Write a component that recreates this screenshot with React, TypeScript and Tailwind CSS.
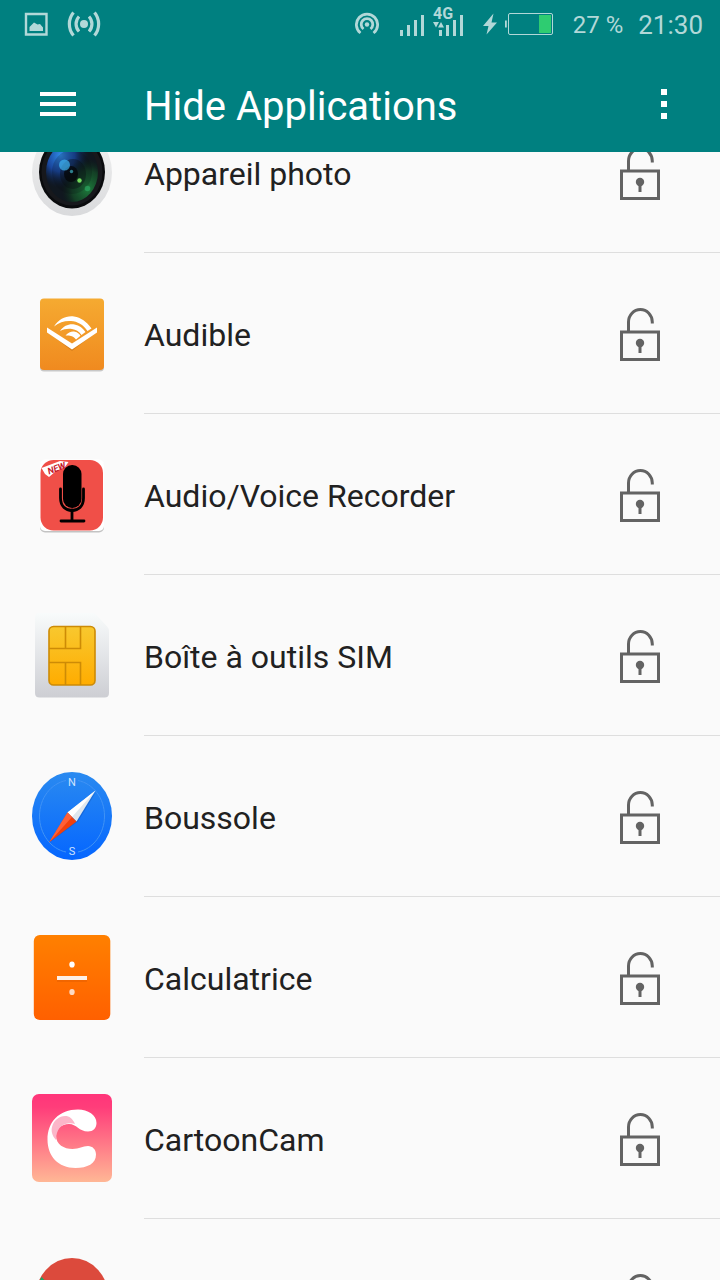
import { useLayoutEffect, useRef, useState, type ReactElement } from "react";

interface AppEntry {
  name: string;
  Icon: () => ReactElement;
}

const iconClass = "h-22 w-20 shrink-0";

function CameraIcon() {
  return (
    <svg viewBox="0 0 80 88" className={iconClass} aria-hidden="true">
      <defs>
        <linearGradient id="cam-rim" x1="0" y1="0" x2="0" y2="1">
          <stop offset="0" stopColor="#f3f3f3" />
          <stop offset="1" stopColor="#d9dadc" />
        </linearGradient>
        <radialGradient id="cam-blue" cx="0.28" cy="0.22" r="0.55">
          <stop offset="0" stopColor="#2f8ae6" />
          <stop offset="0.5" stopColor="#1b4fb4" stopOpacity="0.85" />
          <stop offset="1" stopColor="#0b1a3a" stopOpacity="0" />
        </radialGradient>
        <radialGradient id="cam-green" cx="0.8" cy="0.78" r="0.5">
          <stop offset="0" stopColor="#1e7a3c" />
          <stop offset="0.6" stopColor="#175c2b" stopOpacity="0.6" />
          <stop offset="1" stopColor="#0b2a16" stopOpacity="0" />
        </radialGradient>
      </defs>
      <ellipse cx="40" cy="44.5" rx="40" ry="43.5" fill="url(#cam-rim)" />
      <ellipse cx="40" cy="44" rx="33" ry="36.5" fill="#0a0b0d" />
      <ellipse cx="40" cy="44" rx="30.500" ry="33.500" fill="#17181c" />
      <ellipse cx="40" cy="44" rx="26" ry="30" fill="#10171f" />
      <ellipse cx="40" cy="44" rx="26" ry="30" fill="url(#cam-blue)" />
      <ellipse cx="40" cy="44" rx="26" ry="30" fill="url(#cam-green)" />
      <ellipse cx="40" cy="44" rx="20" ry="22" fill="#0b0f14" opacity="0.2" />
      <ellipse cx="41" cy="46" rx="13" ry="15" fill="#0b0f14" opacity="0.4" />
      <ellipse cx="39" cy="46" rx="7" ry="8" fill="#05070a" opacity="0.8" />
      <circle cx="32.500" cy="37" r="5.5" fill="#3fb4f0" opacity="0.7" />
      <circle cx="39.5" cy="43.5" r="1.7" fill="#2e7f8d" />
      <circle cx="47.5" cy="52.5" r="2.2" fill="#74d95c" />
      <circle cx="55.5" cy="60.5" r="2.8" fill="#2fae68" opacity="0.6" />
    </svg>
  );
}

function AudibleIcon() {
  return (
    <svg viewBox="0 0 80 88" className={iconClass} aria-hidden="true">
      <defs>
        <linearGradient id="audible-bg" x1="0" y1="0" x2="0" y2="1">
          <stop offset="0" stopColor="#f5aa31" />
          <stop offset="1" stopColor="#f08a1f" />
        </linearGradient>
      </defs>
      <rect x="8" y="11" width="64" height="71.500" rx="4" fill="#000" opacity="0.2" />
      <rect x="8" y="9.5" width="64" height="71.500" rx="4" fill="url(#audible-bg)" />
      <path d="M15.500 41v-3.500L40 54.500l24.500-17V41L40 60Z" transform="translate(0 2)" fill="#b8660f" opacity="0.45" />
      <path d="M15 38.500 40 54.500 65 38.500V43.500L40 60.500 15 43.500Z" fill="#fff" />
      <path d="M22 37.500C27 30 34 26.500 42 27.500c7 1 12.500 5 17.500 12L55.500 42C51 35.500 45.500 32.500 39 32c-6-.4-11.500 1-17 5.500Z" fill="#fff" />
      <path d="M28 42c4-5.500 9-7.300 14.500-6.500 5 .8 8 3.500 11 7.500l-4 3c-2.700-3.700-5.500-5.500-9.500-6-4.300-.5-8 0-12 2Z" fill="#fff" />
      <path d="M33.500 46.500c3-3.500 6.500-4.500 9.500-3.800 2.500.6 4.200 2 5.500 4L44 50.500c-1.500-2-2.800-3.200-5-3.600-1.800-.4-3.500-.5-5.500-.4Z" fill="#fff" />
    </svg>
  );
}

function RecorderIcon() {
  return (
    <svg viewBox="0 0 80 88" className={iconClass} aria-hidden="true">
      <rect x="8" y="11" width="64" height="71.500" rx="5" fill="#000" opacity="0.22" />
      <rect x="8" y="9.500" width="64" height="71.500" rx="5" fill="#fff" />
      <rect x="8.500" y="10" width="62.500" height="70.500" rx="13" fill="#f04f48" />
      <path d="M9.500 18 28 11l8.500 1-3.500 5-9 4-7 6-4-3Z" fill="#fff" />
      <text
        x="17"
        y="24.500"
        transform="rotate(-21 17 24.500)"
        fontFamily="Liberation Sans Narrow, Roboto, sans-serif"
        fontSize="9"
        fontWeight="700"
        fontStyle="italic"
        fill="#c5172b"
      >
        NEW
      </text>
      <rect x="31" y="15" width="18.500" height="43" rx="9" fill="#000" />
      <path d="M28.500 39v9c0 8 5 12.500 11.500 12.500s11.500-4.500 11.500-12.500V39" fill="none" stroke="#000" strokeWidth="2.800" strokeLinecap="round" />
      <path d="M40 60v10M29 71h23" stroke="#000" strokeWidth="2.800" strokeLinecap="round" />
    </svg>
  );
}

function SimIcon() {
  return (
    <svg viewBox="0 0 80 88" className={iconClass} aria-hidden="true">
      <defs>
        <linearGradient id="sim-card" x1="0" y1="0" x2="0" y2="1">
          <stop offset="0" stopColor="#f8fbfb" />
          <stop offset="0.5" stopColor="#e3e5e8" />
          <stop offset="1" stopColor="#cdced3" />
        </linearGradient>
        <linearGradient id="sim-chip" x1="0" y1="0" x2="0" y2="1">
          <stop offset="0" stopColor="#f8c82f" />
          <stop offset="1" stopColor="#ffac00" />
        </linearGradient>
      </defs>
      <path d="M7 2h53c2 0 3 .5 4.500 2L75 15.500c1.500 1.500 2 3 2 5V82c0 3-1.500 4.500-4.500 4.500h-65C4.500 86.500 3 85 3 82V7c0-3 1-5 4-5Z" fill="url(#sim-card)" />
      <rect x="17" y="15.500" width="46" height="58.500" rx="4.500" fill="url(#sim-chip)" stroke="#cd8b06" strokeWidth="1.600" />
      <path d="M17 37.500h31.500V15.500M33.500 15.500v22M17 51.500h31.500V74M33.500 51.500V74" fill="none" stroke="#cd8b06" strokeWidth="1.600" />
    </svg>
  );
}

function CompassIcon() {
  return (
    <svg viewBox="0 0 80 88" className={iconClass} aria-hidden="true">
      <defs>
        <linearGradient id="compass-bg" x1="0" y1="0" x2="0" y2="1">
          <stop offset="0" stopColor="#2a8af0" />
          <stop offset="1" stopColor="#0566ff" />
        </linearGradient>
      </defs>
      <ellipse cx="40" cy="44" rx="40" ry="44" fill="url(#compass-bg)" />
      <path d="M46 8.500C61 11.500 72.500 26 72.500 44S61 77 46 80M34 80C19 77 7.500 62 7.500 44S19 11.500 34 8.500" fill="none" stroke="#4093f5" strokeWidth="1" />
      <g fontFamily="Roboto, sans-serif" fontSize="11" textAnchor="middle" fill="#cfe3fd">
        <text x="40" y="14">N</text>
        <text x="40" y="83">S</text>
      </g>
      <path d="M64 20 46 49.500 18 70Z" fill="#0a3f9c" opacity="0.3" />
      <path d="M63.500 18.500 35.500 40.500 44.500 49.500Z" fill="#dfe7ee" />
      <path d="M63.500 18.500 35.500 40.500 40 45Z" fill="#fff" />
      <path d="M17 70.500 35.500 40.500 44.500 49.500Z" fill="#f1400d" />
      <path d="M17 70.500 35.500 40.500 40 45Z" fill="#ff6036" />
    </svg>
  );
}

function CalculatorIcon() {
  return (
    <svg viewBox="0 0 80 88" className={iconClass} aria-hidden="true">
      <defs>
        <linearGradient id="calc-bg" x1="0" y1="0" x2="0" y2="1">
          <stop offset="0" stopColor="#ff8000" />
          <stop offset="1" stopColor="#ff6000" />
        </linearGradient>
      </defs>
      <rect x="1.800" y="2" width="76.500" height="85" rx="6" fill="url(#calc-bg)" />
      <rect x="25" y="45" width="30" height="4" fill="#c94a00" opacity="0.25" />
      <rect x="25" y="43" width="30" height="4" fill="#fdf0e6" />
      <ellipse cx="40" cy="31.500" rx="2.700" ry="3.100" fill="#fff" />
      <ellipse cx="40" cy="59" rx="2.700" ry="3.100" fill="#fdd9c2" />
    </svg>
  );
}

function CartoonCamIcon() {
  return (
    <svg viewBox="0 0 80 88" className={iconClass} aria-hidden="true">
      <defs>
        <linearGradient id="cartoon-bg" x1="0" y1="0" x2="0" y2="1">
          <stop offset="0" stopColor="#ff357a" />
          <stop offset="0.150" stopColor="#ff3d7a" />
          <stop offset="1" stopColor="#ffb795" />
        </linearGradient>
      </defs>
      <rect width="80" height="88" rx="7" fill="url(#cartoon-bg)" />
      <path
        d="M46 15.500c10 0 18.500 5.500 18.500 13.500 0 5-3.500 8.500-8.500 8.500-9 0-11.500-7.500-19-7.500-8 0-13 5-13 11.500 0 9 8 13.500 16.500 13.500 7 0 10-3 15.500-3 4.500 0 8 3.500 8 8.500 0 9-8.500 13.500-20.500 13.500C26 74 15.500 62 15.500 45.500 15.500 28 27 15.500 46 15.500Z"
        fill="#fff"
      />
      <path d="M24 46c-4-4.500-5-9-4-13 1.700-7 7.500-11 13-11 4.500 0 7.500 2.500 10 8-2-.8-4-.9-6-.7-8 .7-13 6.700-13 16.700Z" fill="#fcb6c9" />
    </svg>
  );
}

function ChromeIcon() {
  return (
    <svg viewBox="0 0 80 88" className={iconClass} aria-hidden="true">
      <ellipse cx="40" cy="44" rx="37" ry="41" fill="#dc4a3c" />
      <path d="M9.500 22C0 38 2 60 14 74c7 7 15 10.500 22 10.500L50 62 40 44Z" fill="#1da462" />
      <path d="M74 30H40L50 62 36 84.500C58 86 77 68 77 44c0-5-1-10-3-14Z" fill="#ffcd46" />
      <path d="M10.500 23 40 23V50Z" fill="#dc4a3c" />
      <ellipse cx="40" cy="45" rx="17" ry="19" fill="#fff" />
      <ellipse cx="40" cy="45" rx="13" ry="15" fill="#4c8bf5" />
    </svg>
  );
}

const apps: AppEntry[] = [
  { name: "Appareil photo", Icon: CameraIcon },
  { name: "Audible", Icon: AudibleIcon },
  { name: "Audio/Voice Recorder", Icon: RecorderIcon },
  { name: "Boîte à outils SIM", Icon: SimIcon },
  { name: "Boussole", Icon: CompassIcon },
  { name: "Calculatrice", Icon: CalculatorIcon },
  { name: "CartoonCam", Icon: CartoonCamIcon },
  { name: "Chrome", Icon: ChromeIcon },
];

export default function App() {
  const listRef = useRef<HTMLElement>(null);
  const [hidden, setHidden] = useState<string[]>([]);

  useLayoutEffect(() => {
    if (listRef.current) listRef.current.scrollTop = 60;
  }, []);

  const toggle = (name: string) =>
    setHidden((prev) =>
      prev.includes(name) ? prev.filter((n) => n !== name) : [...prev, name]
    );

  return (
    <div className="flex h-screen flex-col bg-[#fafafa] font-[Roboto,sans-serif]">
      <header className="bg-[#008080]">
        <StatusBar />
        <div className="flex h-26 items-center pt-2 pr-10 pl-10 text-white">
          <button type="button" aria-label="Menu">
            <svg viewBox="0 0 36 24" className="h-6 w-9" fill="currentColor">
              <path d="M0 0h36v4H0zM0 10h36v4H0zM0 20h36v4H0z" />
            </svg>
          </button>
          <h1 className="ml-17 flex-1 pt-1.5 text-[40px] leading-12">
            Hide Applications
          </h1>
          <button type="button" aria-label="Options" className="w-8">
            <svg viewBox="0 0 32 30" className="h-[30px] w-8" fill="currentColor">
              <path d="M13 0h6v6h-6zM13 12h6v6h-6zM13 24h6v6h-6z" />
            </svg>
          </button>
        </div>
      </header>

      <main ref={listRef} className="flex-1 overflow-y-auto [scrollbar-width:none]">
        <ul>
          {apps.map(({ name, Icon }) => (
            <li key={name} className="flex pl-8">
              <div className="flex items-center pr-8 pb-0.5">
                <Icon />
              </div>
              <div className="flex h-[161px] flex-1 items-center justify-between border-b border-[#dedede] pr-[60px]">
                <span className="pt-1 text-[32px] leading-8 text-[#212121]">
                  {name}
                </span>
                <button
                  type="button"
                  aria-label={name}
                  aria-pressed={hidden.includes(name)}
                  onClick={() => toggle(name)}
                >
                  <LockIcon locked={hidden.includes(name)} />
                </button>
              </div>
            </li>
          ))}
        </ul>
      </main>
    </div>
  );
}

function LockIcon({ locked }: { locked: boolean }) {
  return (
    <svg viewBox="0 0 40 56" className="h-14 w-10" fill="none" stroke="#636363" strokeWidth="3">
      <rect x="1.500" y="27" width="37" height="27.500" />
      <path d={locked ? "M8.500 27V17a11.700 12 0 0 1 23.400 0v10" : "M8.500 27V17a11.900 12.500 0 0 1 23.800 0v1.500"} />
      <circle cx="20" cy="38" r="4.200" fill="#636363" stroke="none" />
      <path d="M20 39v9" />
    </svg>
  );
}

function StatusBar() {
  return (
    <div className="flex h-12 items-center justify-between pr-[17px] pl-6 text-[#b2d8d8]">
      <div className="flex items-center gap-[18px]">
        <svg viewBox="0 0 24 24" className="size-6" fill="currentColor" aria-hidden="true">
          <path d="M2 2h20.500v20.500H2Z" fill="none" stroke="currentColor" strokeWidth="2.400" />
          <path d="M5.500 19v-4l4.500-4.500 3.500 2 2.500-.5 3 3.500V19Z" />
        </svg>
        <svg viewBox="0 0 36 26" className="h-[26px] w-9" fill="none" stroke="currentColor" strokeWidth="3.200" aria-hidden="true">
          <circle cx="18" cy="13" r="4" fill="currentColor" stroke="none" />
          <path d="M13 5.500a11 11 0 0 0 0 15M23 5.500a11 11 0 0 1 0 15M7.500 1.500a18 18 0 0 0 0 23M28.500 1.500a18 18 0 0 1 0 23" />
        </svg>
      </div>

      <div className="flex items-center gap-5">
        <svg viewBox="0 0 24 24" className="size-6" fill="none" stroke="currentColor" strokeWidth="2.800" aria-hidden="true">
          <circle cx="12" cy="12.500" r="2.200" fill="currentColor" stroke="none" />
          <path d="M5.500 21a10.600 10.600 0 1 1 13 0" />
          <path d="M8.500 17a5.800 5.800 0 1 1 7 0" />
        </svg>
        <div className="flex items-center gap-2">
          <svg viewBox="0 0 25 40" className="h-10 w-[25px]" fill="currentColor" aria-hidden="true">
            <path d="M1 26h3v6H1zM8 21h3v11H8zM15 16h3v16h-3zM22 11h3v21h-3z" />
          </svg>
          <svg viewBox="0 0 31 40" className="h-10 w-[31px]" fill="currentColor" aria-hidden="true">
            <text x="1" y="15" fontFamily="Liberation Sans Narrow, Roboto, sans-serif" fontSize="16" fontWeight="700">
              4G
            </text>
            <path d="M1 18h6l-3 5.500zM6 23.500l3-5.500 3 5.500zM7 26h3v6H7zM14 21h3v11h-3zM21 16h3v16h-3zM28 11h3v21h-3z" />
          </svg>
        </div>
        <div className="flex items-center gap-2">
          <svg viewBox="0 0 14 22" className="h-[22px] w-[14px]" fill="currentColor" aria-hidden="true">
            <path d="M10.500 0.500 0 13h5.500L3.500 21.500 14 9.500H8.500Z" />
          </svg>
          <svg viewBox="0 0 48 22" className="h-[22px] w-12" aria-hidden="true">
            <path d="M0 7.500h1.800v7H0z" fill="currentColor" />
            <rect x="3.500" y="0.500" width="44" height="21" rx="1.500" fill="none" stroke="currentColor" />
            <rect x="34" y="2" width="12" height="18" fill="#2ecc71" />
          </svg>
        </div>
        <div className="flex items-center gap-[15px] pt-0.5 leading-8">
          <span className="text-[24px]">27 %</span>
          <span className="text-[26px]">21:30</span>
        </div>
      </div>
    </div>
  );
}
